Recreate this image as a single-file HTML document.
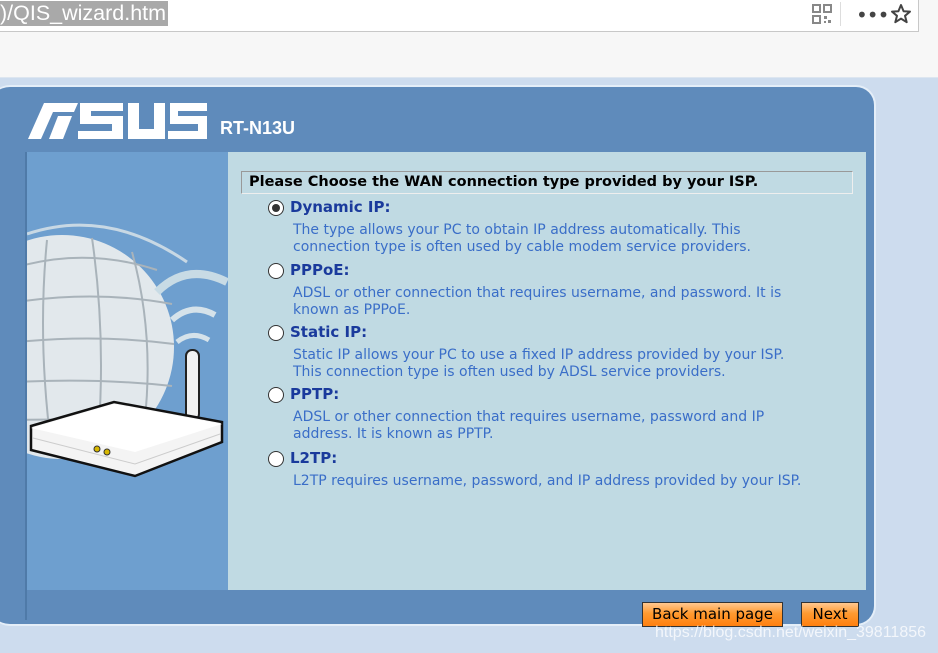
<!DOCTYPE html>
<html><head><meta charset="utf-8"><style>
*{margin:0;padding:0;box-sizing:border-box}
body{width:938px;height:653px;overflow:hidden;background:#f7f7f7;font-family:"DejaVu Sans",Verdana,sans-serif;position:relative}
.url{position:absolute;left:0;top:0;width:919px;height:32px;background:#fff;border-bottom:1px solid #c8c8c8;border-right:1px solid #c8c8c8}
.url span{position:absolute;left:0;top:1px;background:#a9a9a9;color:#fff;font-family:"Liberation Sans",sans-serif;font-size:21.5px;line-height:25px;padding-right:2px}
.bg{position:absolute;left:0;top:77px;width:938px;height:576px;background:#cddcee;border-top:1px solid #dde6f0}
.panel{position:absolute;left:-10px;top:85px;width:886px;height:541px;background:#5f8bbb;border-radius:20px;border:2px solid #e4eef8;border-left:none}
.t{position:absolute}
.left{position:absolute;left:27px;top:152px;width:201px;height:438px;background:#6e9fcf;overflow:hidden}
.content{position:absolute;left:228px;top:152px;width:638px;height:438px;background:#c0dae3}
.title{position:absolute;left:13px;top:19px;width:612px;height:23px;border:1px solid #999;border-right-color:#eee;border-bottom-color:#eee;font-weight:bold;font-size:14.5px;line-height:21px;padding-left:7px;color:#000}
.opt{position:absolute;left:40px}
.radio{position:absolute;left:0;top:2px;width:16px;height:16px;border-radius:50%;border:1px solid #333;background:#fff}
.radio.on::after{content:"";position:absolute;left:3px;top:3px;width:8px;height:8px;border-radius:50%;background:#333}
.lbl{position:absolute;left:22px;top:0;font-weight:bold;font-size:15px;color:#1a3a9c;white-space:nowrap;line-height:18px}
.desc{position:absolute;left:25px;top:24px;font-size:14px;color:#3a6ec8;white-space:nowrap;line-height:16.5px}
.btn{position:absolute;top:602px;height:25px;border:1px solid #333;background:linear-gradient(#ffc890,#ff9a30 45%,#ff8010);font-family:"DejaVu Sans",sans-serif;font-size:15px;line-height:23px;text-align:center;color:#000}
.wm{position:absolute;left:655px;top:624px;font-family:"Liberation Sans",sans-serif;font-size:16px;color:rgba(255,255,255,.75)}
</style></head><body>
<div class="url"><span>)/QIS_wizard.htm</span>
<svg class="t" style="left:812px;top:4px" width="20" height="20" viewBox="0 0 20 20" fill="#888"><rect x="1" y="1" width="7" height="7" fill="none" stroke="#888" stroke-width="2"/><rect x="12" y="1" width="7" height="7" fill="none" stroke="#888" stroke-width="2"/><rect x="1" y="12" width="7" height="7" fill="none" stroke="#888" stroke-width="2"/><rect x="12" y="12" width="3" height="3"/><rect x="16" y="16" width="3" height="3"/><rect x="12" y="17" width="2" height="2"/></svg>
<div class="t" style="left:840px;top:2px;width:1px;height:24px;background:#ddd"></div>
<div class="t" style="left:856px;top:3px;font-size:20px;color:#444;letter-spacing:-1px">•••</div>
<svg class="t" style="left:890px;top:3px" width="22" height="22" viewBox="0 0 22 22"><path d="M11 2 L13.6 8.2 L20 8.6 L15 12.8 L16.7 19.2 L11 15.6 L5.3 19.2 L7 12.8 L2 8.6 L8.4 8.2 Z" fill="none" stroke="#444" stroke-width="2" stroke-linejoin="round"/></svg>
</div>
<div class="bg"></div>
<div class="panel"></div>
<svg class="t" style="left:28px;top:103px" width="180" height="36" viewBox="0 0 180 36" fill="#fff">
<path d="M16 0 H50 L46 9 H25 L13 36 H0 Z"/>
<path d="M30 13 H44 L35 36 H21 Z"/>
<path d="M56 0 H95 V8 H63 V13 H95 V36 H50 V28 H84 V21 H52 V0 Z"/>
<path d="M100 0 H111 V26 H126 V0 H137 V36 H100 Z"/>
<path d="M142 0 H179 V8 H150 V13 H179 V36 H140 V28 H170 V21 H142 Z"/>
</svg>
<div class="t" style="left:220px;top:118px;font-family:'Liberation Sans',sans-serif;font-weight:bold;font-size:18px;color:#fff">RT-N13U</div>
<div class="t" style="left:25px;top:152px;width:2px;height:468px;background:#4f7aa8"></div>
<div class="left">
<svg width="201" height="438" viewBox="0 0 201 438">
<path d="M0 82 Q80 55 160 110" stroke="#c8d8e4" stroke-width="3" fill="none"/>
<circle cx="35" cy="195" r="112" fill="#e2e8ec"/>
<g stroke="#a9b3ba" stroke-width="2" fill="none">
<path d="M-10 115 Q60 95 130 118"/><path d="M-10 150 Q70 138 145 152"/><path d="M-10 190 Q70 182 147 192"/><path d="M-10 230 Q70 226 145 234"/><path d="M-10 268 Q70 266 135 272"/>
<path d="M20 88 Q10 190 25 300"/><path d="M65 86 Q80 190 70 300"/><path d="M105 100 Q130 190 115 290"/>
</g>
<path d="M130 140 Q160 110 200 130" stroke="#c8dbe5" stroke-width="8" fill="none"/>
<path d="M145 168 Q165 150 188 163" stroke="#d5e2ea" stroke-width="6" fill="none"/>
<path d="M150 190 Q165 178 182 188" stroke="#d5e2ea" stroke-width="5" fill="none"/>
<rect x="159" y="198" width="13" height="70" rx="6" fill="#f2f2f2" stroke="#222" stroke-width="2"/>
<path d="M4 274 L87 250 L195 270 L195 290 L108 324 L4 298 Z" fill="#f4f4f4" stroke="#111" stroke-width="2.5"/>
<path d="M4 276 L87 252 L195 272 L108 300 Z" fill="#fff"/>
<path d="M6 286 L108 312 L193 282" stroke="#ccc" fill="none"/>
<circle cx="70" cy="297" r="3" fill="#d8b800" stroke="#333"/><circle cx="80" cy="300" r="3" fill="#d8b800" stroke="#333"/>
</svg>
</div>
<div class="content">
<div class="title">Please Choose the WAN connection type provided by your ISP.</div>
<div class="opt" style="top:46px"><div class="radio on"></div><div class="lbl">Dynamic IP:</div><div class="desc">The type allows your PC to obtain IP address automatically. This<br>connection type is often used by cable modem service providers.</div></div>
<div class="opt" style="top:109px"><div class="radio"></div><div class="lbl">PPPoE:</div><div class="desc">ADSL or other connection that requires username, and password. It is<br>known as PPPoE.</div></div>
<div class="opt" style="top:171px"><div class="radio"></div><div class="lbl">Static IP:</div><div class="desc">Static IP allows your PC to use a fixed IP address provided by your ISP.<br>This connection type is often used by ADSL service providers.</div></div>
<div class="opt" style="top:233px"><div class="radio"></div><div class="lbl">PPTP:</div><div class="desc">ADSL or other connection that requires username, password and IP<br>address. It is known as PPTP.</div></div>
<div class="opt" style="top:297px"><div class="radio"></div><div class="lbl">L2TP:</div><div class="desc">L2TP requires username, password, and IP address provided by your ISP.</div></div>
</div>
<div class="btn" style="left:642px;width:141px">Back main page</div>
<div class="btn" style="left:801px;width:58px">Next</div>
<div class="wm">https://blog.csdn.net/weixin_39811856</div>
</body></html>
